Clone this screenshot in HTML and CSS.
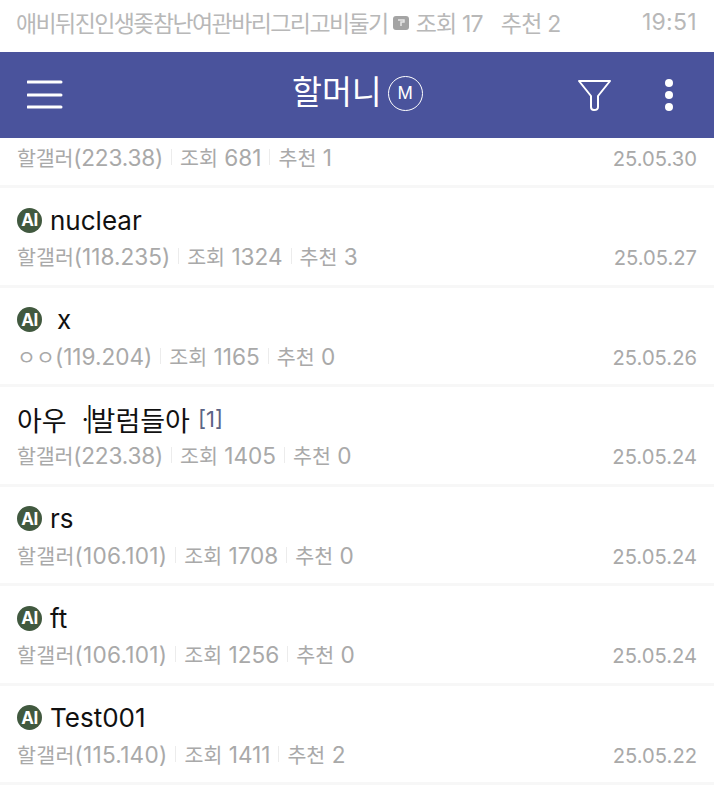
FILE: index.html
```html
<!DOCTYPE html>
<html lang="ko">
<head>
    <title>할머니</title>
    <link rel="stylesheet" href="styles.css">
</head>
<body>
    <div class="statusbar">
        <span class="status-title">애비뒤진인생좆참난여관바리그리고비둘기</span>
        <svg class="pic-icon" width="16" height="14" viewBox="0 0 16 14">
            <rect width="16" height="14" rx="3" fill="#a4a4a4"/>
            <path d="M5 4H11V6H8V10" fill="none" stroke="#e6e6e6" stroke-width="1.5"/>
        </svg>
        <span class="status-meta">조회 17</span>
        <span class="status-meta">추천 2</span>
        <span class="clock">19:51</span>
    </div>

    <div class="navbar">
        <svg class="menu-icon" width="36" height="30" viewBox="0 0 36 30">
            <path d="M1 2H34M1 15H34M1 27H34" stroke="#fff" stroke-width="3" stroke-linecap="round"/>
        </svg>
        <div class="nav-title">
            <span>할머니</span>
            <span class="m-badge">M</span>
        </div>
        <svg class="filter-icon" width="35" height="33" viewBox="0 0 35 33">
            <path d="M2 2H33L21 17V28Q21 31 17 31Q14 31 14 28V17Z" fill="none" stroke="#fff" stroke-width="2" stroke-linejoin="round"/>
        </svg>
        <svg class="more-icon" width="10" height="32" viewBox="0 0 10 32">
            <circle cx="5" cy="4" r="4" fill="#fff"/>
            <circle cx="5" cy="16" r="4" fill="#fff"/>
            <circle cx="5" cy="28" r="4" fill="#fff"/>
        </svg>
    </div>

    <div class="list">
        <div class="row first">
            <div class="meta">
                <span class="tight"><b>할갤러</b>(223.38)</span><i class="sep"></i><span><b>조회</b> 681</span><i class="sep"></i><span><b>추천</b> 1</span>
                <span class="date">25.05.30</span>
            </div>
        </div>
        <div class="row">
            <div class="title"><span class="ai">AI</span>nuclear</div>
            <div class="meta">
                <span><b>할갤러</b>(118.235)</span><i class="sep"></i><span><b>조회</b> 1324</span><i class="sep"></i><span><b>추천</b> 3</span>
                <span class="date">25.05.27</span>
            </div>
        </div>
        <div class="row">
            <div class="title"><span class="ai">AI</span><span class="wide">x</span></div>
            <div class="meta">
                <span><b>ㅇㅇ</b>(119.204)</span><i class="sep"></i><span><b>조회</b> 1165</span><i class="sep"></i><span><b>추천</b> 0</span>
                <span class="date">25.05.26</span>
            </div>
        </div>
        <div class="row">
            <div class="title hangul"><span>아우</span><span class="cut">·|</span><span>발럼들아</span><span class="reply">[1]</span></div>
            <div class="meta">
                <span class="tight"><b>할갤러</b>(223.38)</span><i class="sep"></i><span><b>조회</b> 1405</span><i class="sep"></i><span><b>추천</b> 0</span>
                <span class="date">25.05.24</span>
            </div>
        </div>
        <div class="row">
            <div class="title"><span class="ai">AI</span>rs</div>
            <div class="meta">
                <span class="loose"><b>할갤러</b>(106.101)</span><i class="sep"></i><span><b>조회</b> 1708</span><i class="sep"></i><span><b>추천</b> 0</span>
                <span class="date">25.05.24</span>
            </div>
        </div>
        <div class="row">
            <div class="title"><span class="ai">AI</span>ft</div>
            <div class="meta">
                <span class="loose"><b>할갤러</b>(106.101)</span><i class="sep"></i><span><b>조회</b> 1256</span><i class="sep"></i><span><b>추천</b> 0</span>
                <span class="date">25.05.24</span>
            </div>
        </div>
        <div class="row">
            <div class="title"><span class="ai">AI</span>Test001</div>
            <div class="meta">
                <span class="loose"><b>할갤러</b>(115.140)</span><i class="sep"></i><span><b>조회</b> 1411</span><i class="sep"></i><span><b>추천</b> 2</span>
                <span class="date">25.05.22</span>
            </div>
        </div>
    </div>
</body>
</html>
```

FILE: styles.css
```css
* {
    box-sizing: border-box;
}
html, body {
    height: 100%;
}
body {
    margin: 0;
    background: #fff;
    overflow: hidden;
    font-family: Inter, "Noto Sans CJK KR", sans-serif;
}
.statusbar {
    height: 52px;
    padding: 0 17px 9px 16px;
    display: flex;
    align-items: center;
    color: #b8b8b8;
    font-size: 23px;
}
.status-title {
    letter-spacing: -1.6px;
}
.pic-icon {
    margin: 2px 7px 0 5px;
}
.status-meta {
    margin-right: 18px;
    letter-spacing: -0.8px;
}
.clock {
    margin-left: auto;
    letter-spacing: 0.3px;
}
.navbar {
    height: 86px;
    padding: 0 40px 0 27px;
    display: flex;
    align-items: center;
    background: #4a539c;
    color: #fff;
    position: relative;
}
.nav-title {
    position: absolute;
    left: 292px;
    top: 19px;
    display: flex;
    align-items: center;
    gap: 6px;
    font-size: 32.5px;
    line-height: 44px;
}
.m-badge {
    width: 35px;
    height: 35px;
    border: 1.5px solid #fff;
    border-radius: 50%;
    display: flex;
    align-items: center;
    justify-content: center;
    font-size: 17px;
    font-weight: 400;
}
.filter-icon {
    margin-left: auto;
}
.more-icon {
    margin-left: 52px;
}
.row {
    height: 99.5px;
    padding: 14px 17px 0;
    border-bottom: 3px solid #f7f7f7;
}
.row.first {
    height: 50px;
    padding-top: 4px;
}
.first .meta {
    margin-top: 0;
}
.title {
    display: flex;
    align-items: center;
    height: 36px;
    font-size: 26px;
    color: #111;
}
.hangul {
    font-size: 27px;
}
.ai {
    width: 25px;
    height: 25px;
    margin-right: 8px;
    border-radius: 50%;
    background: #41593f;
    color: #fff;
    display: flex;
    align-items: center;
    justify-content: center;
    font-size: 17px;
    font-weight: 700;
    letter-spacing: -0.5px;
}
.wide {
    margin-left: 7px;
}
.cut {
    margin-left: 15px;
    letter-spacing: -3px;
    font-size: 24px;
}
.reply {
    margin-left: 8px;
    color: #5b6485;
    font-size: 22px;
}
.meta {
    display: flex;
    align-items: baseline;
    height: 30px;
    margin-top: 3px;
    color: #a9a9a9;
    font-size: 22.6px;
}
.meta b {
    font-size: 20.6px;
    font-weight: 400;
}
.tight {
    letter-spacing: -0.2px;
}
.loose {
    letter-spacing: 0.25px;
}
.sep {
    width: 1px;
    height: 16px;
    margin: 0 8px;
    background: #ececec;
    align-self: center;
}
.date {
    margin-left: auto;
    font-size: 20.2px;
}
```
